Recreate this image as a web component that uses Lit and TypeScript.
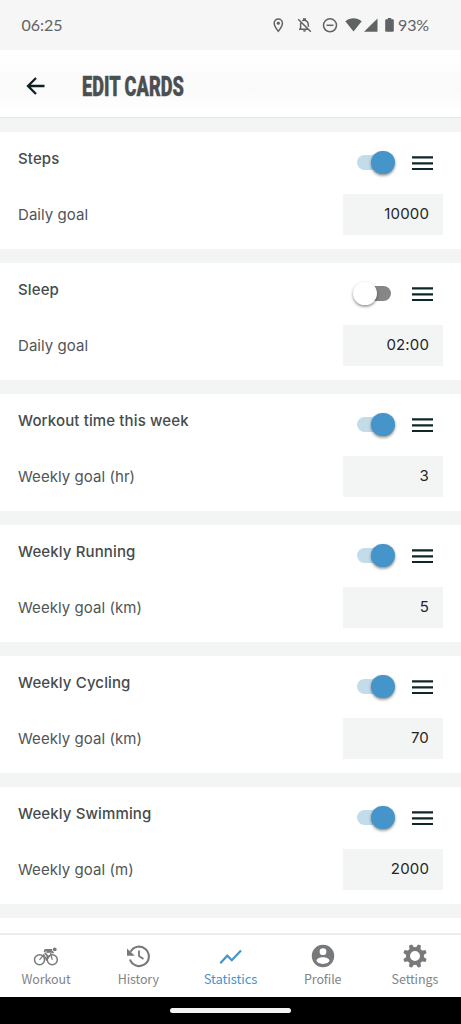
import { LitElement, html, css, svg } from 'lit';
import { customElement, property } from 'lit/decorators.js';
import { classMap } from 'lit/directives/class-map.js';

interface GoalCard {
  title: string;
  label: string;
  value: string;
  on: boolean;
}

const CARDS: GoalCard[] = [
  { title: 'Steps', label: 'Daily goal', value: '10000', on: true },
  { title: 'Sleep', label: 'Daily goal', value: '02:00', on: false },
  { title: 'Workout time this week', label: 'Weekly goal (hr)', value: '3', on: true },
  { title: 'Weekly Running', label: 'Weekly goal (km)', value: '5', on: true },
  { title: 'Weekly Cycling', label: 'Weekly goal (km)', value: '70', on: true },
  { title: 'Weekly Swimming', label: 'Weekly goal (m)', value: '2000', on: true },
];

@customElement('status-bar')
class StatusBar extends LitElement {
  static styles = css`
    :host { display: flex; height: 50px; flex: none; background: #f6f6f6; color: #606363; padding: 0 32px 0 21.5px;
      align-items: center; justify-content: space-between; font: 400 16px/20px Lato, sans-serif; }
    .right { display: flex; align-items: center; }
    svg { display: block; margin-right: 1px; }
    .pct { letter-spacing: -0.15px; }
  `;
  render() {
    return html`
      <span class="time">06:25</span>
      <span class="right">
        <svg width="125" height="20" viewBox="0 0 125 20" fill="none" stroke="#606363" stroke-width="1.5">
          <path d="M6.3 16.2C4 13.4 2.2 11 2.2 8.2a4.1 4.1 0 0 1 8.200 0c0 2.800-1.800 5.200-4.100 8z" />
          <circle cx="6.300" cy="8.200" r="1.600" fill="#606363" stroke="none" />
          <path d="M26.200 4.300 38.800 16.700M27 14.300h9.500M28.600 14V9.300c0-.8.2-1.500.5-2M30.200 5.700c2.900-1.500 6.100.6 6.100 3.800v2.300" />
          <path d="M31 3.300h3v2h-3zM31 15.300h3a1.500 1.500 0 0 1-3 0z" fill="#606363" stroke="none" />
          <circle cx="58" cy="10.300" r="6.500" /><path d="M54.500 10.300h7" />
          <path d="M73.300 6.300c4.700-4 11.700-4 16.400 0L81.500 16.500z" fill="#606363" stroke="none" />
          <path d="M105.500 3.500v13.300H92z" fill="#606363" stroke="none" />
          <path d="M114.200 4.300h1.600V3h3.400v1.300h1.600q1 0 1 1v10.500q0 1-1 1h-6.600q-1 0-1-1V5.300q0-1 1-1z" fill="#606363" stroke="none" />
        </svg>
        <span class="pct">93%</span>
      </span>`;
  }
}

@customElement('page-header')
class PageHeader extends LitElement {
  static styles = css`
    :host { display: flex; flex: none; height: 67px; align-items: center; padding-left: 26px;
      background: linear-gradient(#fff, #fafafa 60%, #fff 90%); border-bottom: 1px solid #e3e6e6; }
    .back { display: block; margin: 4px 37px 0 0; }
    .title { display: block; margin-top: 6px; font: 900 27px/34px Roboto, sans-serif; color: #4c4f50;
      -webkit-text-stroke: 0.4px #4c4f50; white-space: nowrap; transform: scaleX(0.673); transform-origin: left center; }
  `;
  render() {
    return html`
      <svg class="back" width="19" height="20" viewBox="0 0 19 20" fill="none" stroke="#0e2023" stroke-width="2.300">
        <path d="M18.500 10H2M10 2 2 10l8 8" />
      </svg>
      <span class="title">EDIT CARDS</span>`;
  }
}

@customElement('goal-card')
class GoalCardElement extends LitElement {
  @property({ attribute: false }) card!: GoalCard;
  static styles = css`
    :host { display: block; flex: none; box-sizing: border-box; height: 117px; background: #fff; padding: 13px 18px 0;
      font: 400 15px/20px Inter, sans-serif; color: #505556; }
    .row { display: flex; align-items: center; }
    .top { height: 34px; }
    .title { flex: 1; font-weight: 500; color: #464b4c; margin-top: -6px; letter-spacing: 0.13px; }
    .bottom { margin-top: 14.500px; height: 41px; }
    .label { flex: 1; letter-spacing: 0.06px; padding-top: 1px; }
    .value { box-sizing: border-box; width: 100px; height: 41px; background: #f3f5f5; color: #1e2526;
      text-align: right; padding: 10.500px 14px 0 0; letter-spacing: 0.15px; }
    .switch { display: flex; align-items: center; width: 34px; height: 15px; border-radius: 8px; background: #c3dcea; margin-right: 21px; }
    .knob { flex: none; width: 23.500px; height: 23.500px; border-radius: 50%; background: #4595ca; margin-left: 14px;
      box-shadow: 0 1.500px 3px rgba(0, 0, 0, 0.45); }
    .off { background: #858687; }
    .off .knob { background: #fff; margin-left: -4px; }
    .menu { display: block; margin: 1px 10px 0 0; }
  `;
  render() {
    const { title, label, value, on } = this.card;
    return html`
      <div class="row top">
        <span class="title">${title}</span>
        <span class=${classMap({ switch: true, off: !on })}><span class="knob"></span></span>
        <svg class="menu" width="21" height="16" viewBox="0 0 21 16" stroke="#10272a" stroke-width="2.200">
          <path d="M0 2.300h21M0 8.300h21M0 14h21" />
        </svg>
      </div>
      <div class="row bottom">
        <span class="label">${label}</span>
        <span class="value">${value}</span>
      </div>`;
  }
}

const ICONS = {
  workout: svg`<g fill="none" stroke="#77797b" stroke-width="1.500">
      <circle cx="5.500" cy="15.800" r="5" /><circle cx="18.300" cy="15.800" r="5" />
      <path d="M5.500 15.800 9.800 10.500l2.700 5.300 4.500-5.500M16.500 9l1.800 6.800" stroke-width="1.200" />
      <path d="M10.500 8.300 11.300 6 18 5.800M12.500 8l5.500-.3 1.500 1.300" stroke-width="1.800" /><path d="M11 9l2.500 3-1 4.500" stroke-width="1.800" /></g>
      <circle cx="20.700" cy="5.300" r="1.900" fill="#77797b" />`,
  history: svg`<g fill="none" stroke="#77797b" stroke-width="2.100">
      <path d="M4.600 7.800A9.700 9.700 0 1 1 4 15.500" /><path d="M13 6.500V12l4.500 3" stroke-width="1.800" /></g>
      <path d="M1 4.500v7.300h7.800z" fill="#77797b" />`,
  statistics: svg`<path d="M2.300 19.200 9.300 11.700l4.500 4.500L23 6.500" fill="none" stroke="#4296cc" stroke-width="2.200" />`,
  profile: svg`<path fill-rule="evenodd" fill="#77797b" d="M12 .8a11.200 11.200 0 1 1 0 22.400a11.200 11.200 0 0 1 0-22.400zM12 4.300a3.400 3.400 0 1 0 0 6.800a3.400 3.400 0 0 0 0-6.800zM12 13.300c-3.200 0-6.500 1.500-6.500 3.300S8.800 20 12 20s6.500-1.600 6.500-3.400-3.300-3.300-6.500-3.300z" />`,
  settings: svg`<g fill="#77797b"><circle cx="12" cy="12" r="7" fill="none" stroke="#77797b" stroke-width="4" />
      ${[22.5, 67.5, 112.5, 157.5, 202.5, 247.5, 292.5, 337.5].map(
        (a) => svg`<path d="M9.600 4 10.300.2q1.700-.5 3.400 0L14.400 4z" transform="rotate(${a} 12 12)" />`,
      )}</g>`,
};

@customElement('tab-bar')
class TabBar extends LitElement {
  static styles = css`
    :host { display: grid; grid-template-columns: repeat(5, 1fr); box-sizing: border-box; flex: none; height: 64px;
      background: #fff; border-top: 2px solid #ebecec; color: #828486; font: 400 12.500px/18px "Noto Sans CJK SC", sans-serif; }
    .tab { display: flex; flex-direction: column; align-items: center; padding-top: 9px; gap: 2px; letter-spacing: -0.1px; }
    .icon { display: block; }
    .active { color: #4296cc; font-size: 13px; }
  `;
  render() {
    const tabs: [keyof typeof ICONS, string][] = [
      ['workout', 'Workout'], ['history', 'History'], ['statistics', 'Statistics'], ['profile', 'Profile'], ['settings', 'Settings'],
    ];
    return tabs.map(([id, text]) => html`
      <div class=${classMap({ tab: true, active: id === 'statistics' })}>
        <svg class="icon" width="24" height="24" viewBox="0 0 24 24" overflow="visible">${ICONS[id]}</svg>
        <span>${text}</span>
      </div>`);
  }
}

@customElement('app-root')
class AppRoot extends LitElement {
  static styles = css`
    :host { display: flex; flex-direction: column; height: 1024px; overflow: hidden; background: #000; }
    .list { flex: 1; min-height: 0; overflow: hidden; display: flex; flex-direction: column; gap: 14px;
      padding-top: 14.400px; background: #f3f5f5; }
    .next { flex: none; height: 117px; background: #fff; }
    .gesture { flex: none; height: 27px; display: flex; align-items: center; justify-content: center; }
    .pill { width: 121px; height: 4.500px; border-radius: 3px; background: #f4f4f4; }
  `;
  render() {
    return html`
      <status-bar></status-bar>
      <page-header></page-header>
      <div class="list">
        ${CARDS.map((c) => html`<goal-card .card=${c}></goal-card>`)}
        <div class="next"></div>
      </div>
      <tab-bar></tab-bar>
      <div class="gesture"><span class="pill"></span></div>`;
  }
}
